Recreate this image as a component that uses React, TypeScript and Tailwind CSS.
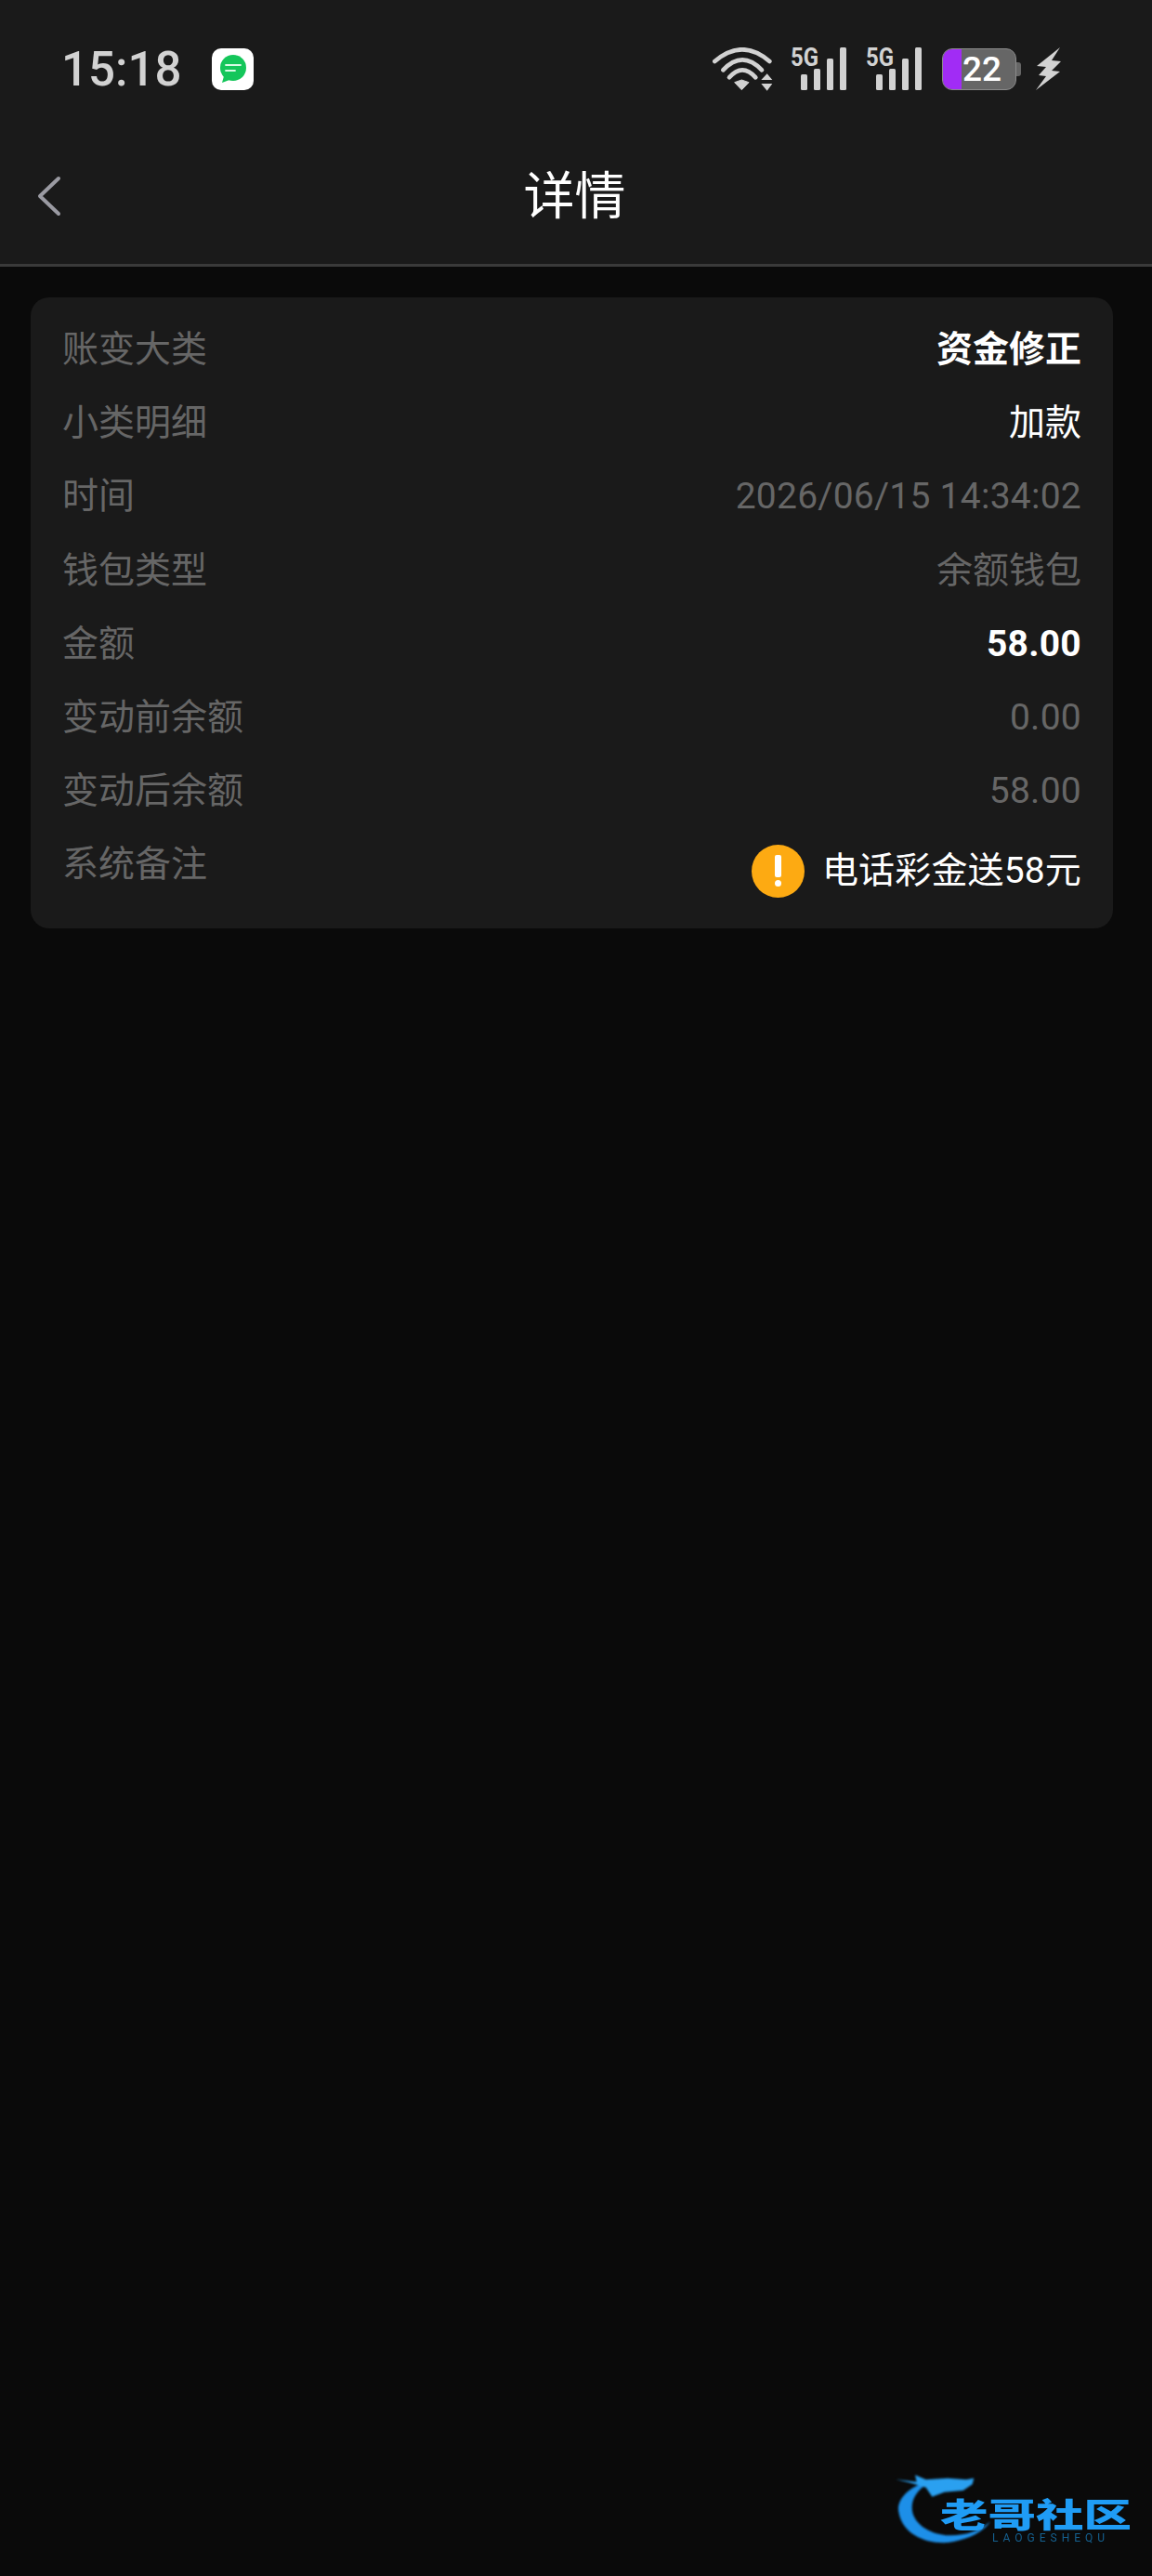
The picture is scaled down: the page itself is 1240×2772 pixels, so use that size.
import React from "react";

const FONT = "font-['Roboto','Noto_Sans_CJK_SC',sans-serif]";

function Wifi() {
  return (
    <svg width="65" height="47" viewBox="0 0 195 141" fill="none" className="shrink-0">
      <g stroke="#d2d2d2" strokeWidth="14" strokeLinecap="round">
        <path d="M7 45 Q96 -31 184 45" />
        <path d="M34 73 Q96 7 159 73" />
        <path d="M54 97 Q96 49 139 97" />
      </g>
      <path d="M71 113 L94 105 L117 113 L94 137 Z" fill="#d2d2d2" stroke="#d2d2d2" strokeWidth="3" strokeLinejoin="round" />
      <path d="M157 105 L176 85 L193 105 Z M157 117 L193 117 L176 140 Z" fill="#d2d2d2" />
    </svg>
  );
}

function Signal() {
  return (
    <svg width="60" height="46" viewBox="0 0 60 46" className="shrink-0 overflow-visible">
      <text x="0" y="20" fontFamily="Roboto" fontWeight="700" fontSize="28" fill="#d2d2d2" textLength="30" lengthAdjust="spacingAndGlyphs">
        5G
      </text>
      <rect x="11" y="29" width="7" height="17" rx="1.5" fill="#d2d2d2" />
      <rect x="25" y="23" width="7" height="23" rx="1.5" fill="#d2d2d2" />
      <rect x="39" y="12" width="7" height="34" rx="1.5" fill="#d2d2d2" />
      <rect x="53" y="0" width="7" height="46" rx="1.5" fill="#d2d2d2" />
    </svg>
  );
}

function Battery() {
  return (
    <div className="flex items-center shrink-0">
      <div className="w-[80px] h-[45px] rounded-[11px] border border-[#8a8a8a] bg-[#666666] flex items-center overflow-hidden">
        <div className="w-[20px] h-full bg-[#a12cf5] shrink-0" />
        <span className="ml-[1px] text-[37px] leading-none font-medium text-white">22</span>
      </div>
      <div className="w-[5px] h-[15px] rounded-r-[3px] bg-[#666666]" />
    </div>
  );
}

function Bolt() {
  return (
    <svg width="28" height="47" viewBox="0 0 28 47" className="shrink-0">
      <path d="M26 0 L1 20 L11 21 L3 30 L11 31 L0 46 L26 26 L17 25 L27 15 L17 14 Z" fill="#d2d2d2" />
    </svg>
  );
}

function NoticeIcon() {
  return (
    <div className="w-[45px] h-[45px] rounded-[10px] bg-white flex items-center justify-center ml-[33px]">
      <svg width="34" height="36" viewBox="0 0 34 36">
        <circle cx="17" cy="17" r="14" fill="#14c65a" />
        <path d="M7 26 L5 33 L13 30 Z" fill="#14c65a" />
        <path d="M9 14 H25" stroke="#d8fbe5" strokeWidth="1.8" strokeLinecap="round" />
        <path d="M9 20 H19" stroke="#d8fbe5" strokeWidth="1.8" strokeLinecap="round" />
      </svg>
    </div>
  );
}

function Row({ label, value, tone, wide }: { label: string; value: string; tone: "bold" | "white" | "muted"; wide?: boolean }) {
  const cls =
    tone === "bold" ? "text-white font-bold" : tone === "white" ? "text-white" : "text-[#666666]";
  return (
    <div className="flex justify-between items-start h-[56px]">
      <span className="text-[39px] leading-[56px] text-[#666666]">{label}</span>
      <span className={`text-[39px] leading-[56px] ${wide ? "tracking-[0.25px]" : ""} ${cls}`}>{value}</span>
    </div>
  );
}

function Watermark() {
  return (
    <div className="absolute left-[940px] top-[2640px] w-[300px] h-[132px]">
      <svg width="300" height="132" viewBox="0 0 900 396" className="absolute left-0 top-0 blur-[1px]">
        <path
          d="M165 95 C100 115 75 160 82 190 C95 270 190 300 260 285 C310 275 355 255 378 220 C345 250 300 265 250 265 C180 265 125 225 125 175 C125 145 145 115 175 100 Z"
          fill="#1d8fe8"
        />
        <path
          d="M72 84 L140 92 L135 70 L170 85 L240 80 L300 85 L325 80 L320 100 L290 120 L230 125 L190 140 L170 110 L120 95 Z"
          fill="#2aa0f0"
        />
      </svg>
      <span className="absolute left-[72px] top-[46px] origin-left scale-x-[1.43] text-[36px] leading-[36px] font-black text-[#1f9cf5] whitespace-nowrap blur-[0.5px] font-['Noto_Sans_CJK_SC',sans-serif]">
        老哥社区
      </span>
      <span className="absolute left-[128px] top-[85px] text-[12px] leading-[12px] tracking-[5px] text-[#15608f] whitespace-nowrap blur-[0.3px]">
        LAOGESHEQU
      </span>
    </div>
  );
}

export default function App() {
  return (
    <div className={`relative w-full min-h-[2772px] bg-[#0a0a0a] ${FONT}`}>
      <header className="bg-[#1a1a1a] border-b-[3px] border-[#3a3a3a]">
        <div className="h-[148px] flex items-center justify-between pl-[66px] pr-[97px]">
          <div className="flex items-center">
            <span className="text-[51px] leading-none font-medium text-[#d2d2d2]">15:18</span>
            <NoticeIcon />
          </div>
          <div className="flex items-center">
            <Wifi />
            <div className="ml-[19px]">
              <Signal />
            </div>
            <div className="ml-[21px]">
              <Signal />
            </div>
            <div className="ml-[22px] flex items-center gap-[16px]">
              <Battery />
              <Bolt />
            </div>
          </div>
        </div>
        <div className="h-[136px] relative flex items-center justify-center pb-[10px] pr-[3px]">
          <svg width="27" height="44" viewBox="0 0 27 44" fill="none" className="absolute left-[39px] top-[41px]">
            <path d="M24 3 L4 22 L24 41" stroke="#9a9aa2" strokeWidth="4" strokeLinecap="round" strokeLinejoin="round" />
          </svg>
          <h1 className="text-[55px] leading-[64px] font-normal text-white">详情</h1>
        </div>
      </header>
      <main className="pl-[33px] pr-[42px] pt-[33px]">
        <section className="bg-[#1a1a1a] rounded-[20px] pl-[34px] pr-[34px] pt-[28px] pb-[33px] flex flex-col gap-[23.2px]">
          <Row label="账变大类" value="资金修正" tone="bold" />
          <Row label="小类明细" value="加款" tone="white" />
          <Row label="时间" value="2026/06/15 14:34:02" tone="muted" wide />
          <Row label="钱包类型" value="余额钱包" tone="muted" />
          <Row label="金额" value="58.00" tone="bold" wide />
          <Row label="变动前余额" value="0.00" tone="muted" wide />
          <Row label="变动后余额" value="58.00" tone="muted" wide />
          <div className="flex justify-between items-start">
            <span className="text-[39px] leading-[56px] text-[#666666]">系统备注</span>
            <div className="mt-[6px] h-[58px] flex items-center gap-[19px]">
              <div className="w-[57px] h-[57px] rounded-full bg-[#fdaa12] flex flex-col items-center justify-center gap-[3px]">
                <div className="w-[7px] h-[24px] rounded-[2px] bg-white" />
                <div className="w-[7px] h-[7px] rounded-full bg-white" />
              </div>
              <span className="text-[39px] leading-[56px] tracking-[0.15px] text-white">电话彩金送58元</span>
            </div>
          </div>
        </section>
      </main>
      <Watermark />
    </div>
  );
}
